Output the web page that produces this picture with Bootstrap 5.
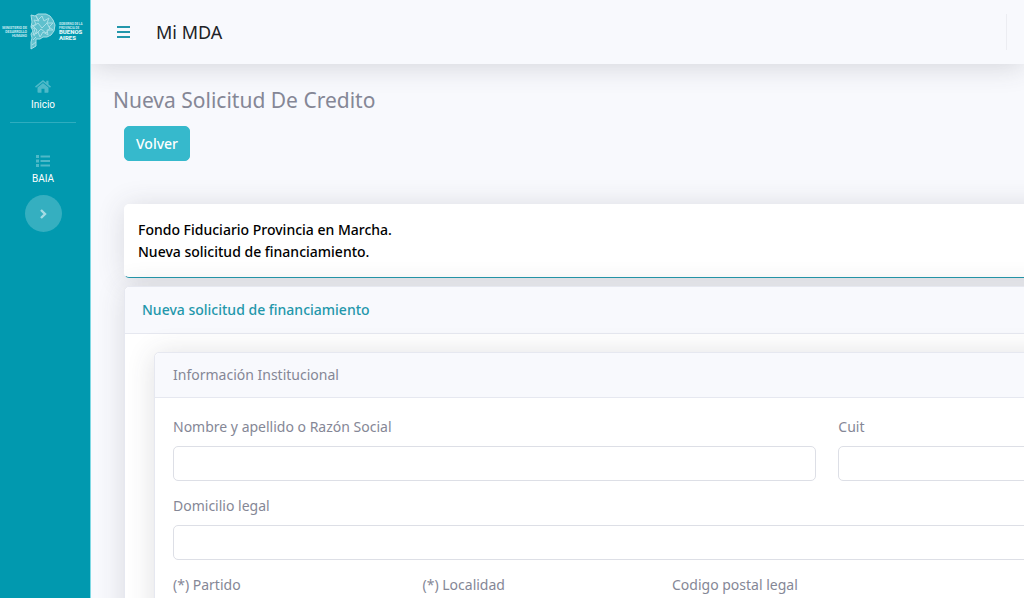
<!DOCTYPE html>
<html lang="es">
<head>
<meta charset="utf-8">
<meta name="viewport" content="width=device-width, initial-scale=1">
<title>Mi MDA</title>
<link href="https://cdn.jsdelivr.net/npm/bootstrap@5.3.0/dist/css/bootstrap.min.css" rel="stylesheet">
<style>
  body { font-family: "Noto Sans", "Open Sans", sans-serif; font-size: 14px; line-height: 22px; color: #858796; background: #f8f9fd; }
  .side { width: 91px; background: #0199af; border-right: 1px solid #7fd9e4; }
  .side-link { width: 66px; font-family: Roboto, sans-serif; font-size: 10px; line-height: 16px; color: #fff; }
  .side-link svg { color: #4fb9c8; }
  .brand-link { height: 64px; }
  .side-rule { width: 66px; height: 1px; margin: 9px 0 16px; background: #2fadbf; }
  .toggle-btn { width: 37px; height: 37px; margin-top: 8px; background: #35afc0; color: #a6dce4; }
  .topbar { height: 64px; background: #f8f9fd; box-shadow: 0 2px 28px rgba(58, 59, 69, .2); z-index: 1; }
  .menu-btn { color: #2397ab; }
  .app-name { margin-left: 25px; font-size: 18px; color: #212226; }
  .top-rule { width: 1px; height: 36px; margin-right: 17px; background: #ecedf2; }
  .page-main { padding: 22px 0 0 22px; }
  .page-title { font-size: 21px; line-height: 28px; margin: 0 0 12px; }
  .btn-back { --bs-btn-bg: #36b9cc; --bs-btn-border-color: #36b9cc; --bs-btn-color: #fff; --bs-btn-hover-bg: #2c9faf; --bs-btn-hover-color: #fff; font-size: 14px; line-height: 21px; font-weight: 500; border-radius: 5px; height: 35px; padding: 4px 11px; }
  .indent { padding-left: 11px; }
  .sheet { min-width: 1085px; margin-top: 43px; }
  .panel { background: #fff; border: 1px solid #e6e8f0; border-radius: 5px; box-shadow: 0 2px 28px rgba(58, 59, 69, .16); }
  .intro { height: 74px; padding: 14px 13px; font-weight: 500; color: #000; border-color: #fff; border-bottom-color: #2397ab; }
  .panel-head { background: #f8f9fd; border-bottom: 1px solid #e6e8f0; border-radius: 5px 5px 0 0; padding: 11px 18px; margin: 0; font-size: 14px; line-height: 22px; font-weight: 400; }
  .panel-main { color: #2397ab; font-weight: 500; padding: 12px 17px; }
  .outer-body { padding: 18px 29px; }
  .inner-body { padding: 18px; }
  .fields { --bs-gutter-x: 22px; }
  .fields .form-label { display: block; margin-bottom: 8px; line-height: 22px; }
  .fields .form-control, .fields .form-select { height: 35px; margin-bottom: 14px; font-size: 14px; border-color: #dddfe6; border-radius: 5px; }
</style>
</head>
<body>
<div class="d-flex min-vh-100 overflow-hidden">
  <nav class="side flex-shrink-0 d-flex flex-column" aria-label="Principal">
    <a href="#" class="brand-link d-flex align-items-center" aria-label="Ministerio de Desarrollo Humano, Buenos Aires">
      <svg width="90" height="40" viewBox="0 0 180 80" fill="#c6eaf0" font-family="Roboto, sans-serif" font-weight="700">
        <g font-size="7" text-anchor="end">
          <text x="54" y="33">MINISTERIO DE</text>
          <text x="54" y="41">DESARROLLO</text>
          <text x="54" y="49">HUMANO</text>
        </g>
        <g transform="scale(2)" stroke="#a8dfe7" stroke-width="1">
          <path fill="#5fc0cd" d="M31 3l4 1 3-2 4 0 4 0 4 2 3 4 2 5-1 6-3 4-4 2-4 0-3 2-4 0v7l-5 3v-7l1-4-1-4 2-3-2-4 1-5z"/>
          <path fill="none" d="M36 4l2 4 4-4 2 5 5-3-2 5 6 0-4 4 4 3-6 0 1 5-5-3-3 5-2-5-5 3 2-6-4-2 5-3-2-4 5 1zM33 15l5-4 4 5 5-5 3 6M36 22l5-5 5 4 4-5M32 13l5 5-3 6M33 28l3-3M32 33l4-3"/>
        </g>
        <g font-size="6">
          <text x="118" y="26">GOBIERNO DE LA</text>
          <text x="118" y="33">PROVINCIA DE</text>
        </g>
        <g font-size="12" font-weight="900" fill="#e3f6f8">
          <text x="118" y="44">BUENOS</text>
          <text x="118" y="56">AIRES</text>
        </g>
      </svg>
    </a>
    <div class="d-flex flex-column align-items-center pe-1">
      <a href="#" class="side-link d-flex flex-column align-items-center text-decoration-none pt-3">
        <svg width="16" height="13" viewBox="0 0 16 13" fill="currentColor"><path d="M8 0L0 6.500l1 1.200L8 2l7 5.700 1-1.200-2.500-2V.8h-2.200v2zM8 3L2.500 7.400V12c0 .5.3.8.8.8h3.200V8.700h3v4.100h3.200c.5 0 .8-.3.8-.8V7.400z"/></svg>
        <span class="pt-1">Inicio</span>
      </a>
      <div class="side-rule"></div>
      <a href="#" class="side-link d-flex flex-column align-items-center text-decoration-none pt-3">
        <svg width="14" height="12" viewBox="0 0 14 12" fill="currentColor"><path d="M0 0h3v3H0zM4.500.5H14v2H4.500zM0 4.500h3v3H0zM4.500 5H14v2H4.500zM0 9h3v3H0zM4.500 9.500H14v2H4.500z"/></svg>
        <span class="pt-1">BAIA</span>
      </a>
      <button type="button" class="toggle-btn btn rounded-circle border-0 p-0 d-flex align-items-center justify-content-center" aria-label="Contraer menú">
        <svg width="8" height="10" viewBox="0 0 8 10" fill="none" stroke="currentColor" stroke-width="2.400"><path d="M2 1l4 4-4 4"/></svg>
      </button>
    </div>
  </nav>

  <div class="flex-grow-1 overflow-hidden">
    <header class="topbar position-relative d-flex align-items-center">
      <button type="button" class="menu-btn btn border-0 p-0 ms-4 d-flex" aria-label="Menú">
        <svg width="16" height="14" viewBox="0 0 16 14" fill="currentColor"><path d="M2 1h13v2H2zM2 6h13v2H2zM2 11h13v2H2z"/></svg>
      </button>
      <span class="app-name">Mi MDA</span>
      <div class="top-rule ms-auto"></div>
    </header>

    <main class="page-main">
      <h1 class="page-title fw-normal">Nueva Solicitud De Credito</h1>
      <div class="indent"><button type="button" class="btn btn-back">Volver</button></div>

      <div class="sheet indent">
        <section class="panel intro">
          Fondo Fiduciario Provincia en Marcha.<br>Nueva solicitud de financiamiento.
        </section>
        <section class="panel mt-2">
          <h2 class="panel-head panel-main">Nueva solicitud de financiamiento</h2>
          <div class="outer-body">
            <form class="panel">
              <h3 class="panel-head">Información Institucional</h3>
              <div class="inner-body">
                <div class="row fields">
                  <div class="col-8"><label class="form-label" for="nombre">Nombre y apellido o Razón Social</label><input class="form-control" id="nombre" type="text"></div>
                  <div class="col-4"><label class="form-label" for="cuit">Cuit</label><input class="form-control" id="cuit" type="text"></div>
                  <div class="col-12"><label class="form-label" for="domicilio">Domicilio legal</label><input class="form-control" id="domicilio" type="text"></div>
                  <div class="col-3"><label class="form-label" for="partido">(*) Partido</label><select class="form-select" id="partido"></select></div>
                  <div class="col-3"><label class="form-label" for="localidad">(*) Localidad</label><select class="form-select" id="localidad"></select></div>
                  <div class="col-3"><label class="form-label" for="postal">Codigo postal legal</label><input class="form-control" id="postal" type="text"></div>
                </div>
              </div>
            </form>
          </div>
        </section>
      </div>
    </main>
  </div>
</div>
<script src="https://cdn.jsdelivr.net/npm/bootstrap@5.3.0/dist/js/bootstrap.bundle.min.js"></script>
</body>
</html>
